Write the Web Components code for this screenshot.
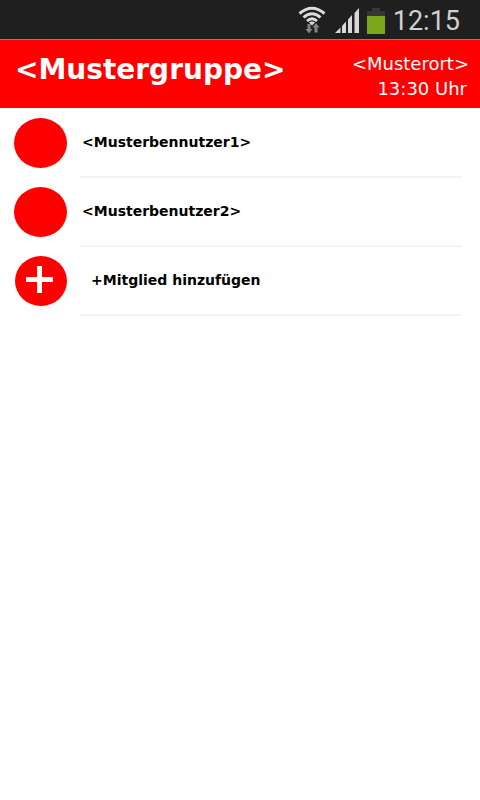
<!DOCTYPE html>
<html lang="de">
<head>
<meta charset="utf-8">
<meta name="viewport" content="width=device-width, initial-scale=1">
<title>Mustergruppe</title>
<style>
  body { margin: 0; background: #fff; color: #000; font-family: "DejaVu Sans", sans-serif; }
</style>
</head>
<body>
<group-screen></group-screen>

<script>
const define = (name, html) => {
  const template = document.createElement('template');
  template.innerHTML = html;
  customElements.define(name, class extends HTMLElement {
    constructor() {
      super();
      this.attachShadow({ mode: 'open' }).append(template.content.cloneNode(true));
    }
  });
};

define('status-bar', `
  <style>
    :host { display: flex; align-items: center; justify-content: flex-end; height: 39px; padding-right: 20px; background: #1f1f1f; border-bottom: 1px solid #8a8078; }
    svg { display: block; flex: none; }
    .signal { margin-left: 9px; margin-top: 3px; }
    .battery { margin-left: 8px; margin-top: 3px; }
    time { margin-left: 8px; padding-top: 3px; color: #d0d0d0; font: 400 27px/32px Roboto, sans-serif; }
  </style>
  <svg width="28" height="28" viewBox="0 0 28 28" aria-label="WLAN" role="img">
    <g fill="none" stroke="#dcdcdc" stroke-width="3">
      <path d="M1.500 7.500Q14 -3 26.500 7.500"/>
      <path d="M5.500 11.500Q14 4 22.500 11.500"/>
      <path d="M9 15Q14 10.500 19 15"/>
    </g>
    <path d="M11 16.500Q14 14.500 17 16.500L14 19.500z" fill="#dcdcdc"/>
    <path d="M9.500 18h3v5h2l-3.500 4.500L7.500 23h2zM16.500 26.500v-5h-2l3.500-4.500 3.500 4.500h-2v5z" fill="#858585"/>
  </svg>
  <svg class="signal" width="24" height="26" viewBox="0 0 24 26" aria-label="Empfang" role="img">
    <path d="M0 25L5.500 19.500V25zM7 18L11 13.500V25H7zM13 11.500L17 7V25h-4zM19.500 5L24 0V25h-4.500z" fill="#d8d8d8"/>
  </svg>
  <svg class="battery" width="18" height="26" viewBox="0 0 18 26" aria-label="Akku" role="img">
    <path d="M5 0h8v3h5v5H0V3h5z" fill="#35373a"/>
    <path d="M0 8h18v18H0z" fill="#7aa81a"/>
  </svg>
  <time>12:15</time>
`);

define('group-header', `
  <style>
    :host { display: flex; justify-content: space-between; height: 68px; padding: 0 11px 0 15px; box-sizing: border-box; background: #f00; color: #fff; }
    h1 { margin: 14px 0 0; font-size: 28px; line-height: 32px; font-weight: 700; }
    .meet { margin-top: 11px; font-size: 18px; line-height: 25px; text-align: right; }
    .when { padding-right: 2px; }
  </style>
  <h1><slot></slot></h1>
  <div class="meet">
    <div><slot name="place"></slot></div>
    <div class="when"><slot name="time"></slot></div>
  </div>
`);

define('group-row', `
  <style>
    :host { display: flex; height: 69px; padding: 0 18px 0 14px; box-sizing: border-box; }
    .avatar { margin-top: 9px; width: 53px; height: 50px; flex: none; }
    .name { flex: 1; min-width: 0; margin-left: 13px; padding: 22px 2px 0; box-sizing: border-box; border-bottom: 2px solid #f4f4f4; font-size: 14px; line-height: 22px; font-weight: 700; }
  </style>
  <div class="avatar"><slot name="avatar"></slot></div>
  <div class="name"><slot></slot></div>
`);

define('user-avatar', `
  <style>
    :host { display: block; width: 53px; height: 50px; border-radius: 50%; background: #f00; }
  </style>
`);

define('group-screen', `
  <style>
    :host { display: block; min-height: 100vh; background: #fff; }
    main { padding-top: 1px; }
    button { display: block; border: 0; padding: 0; background: none; color: inherit; font: inherit; cursor: pointer; }
    .add { width: 52px; height: 50px; margin-left: auto; padding: 0 3px 3px 0; border-radius: 50%; background: #f00; }
    .add svg { display: block; margin: 0 auto; }
    .label { padding-left: 9px; }
  </style>
  <status-bar></status-bar>
  <group-header>&lt;Mustergruppe&gt;<span slot="place">&lt;Musterort&gt;</span><span slot="time">13:30 Uhr</span></group-header>
  <main>
    <group-row><user-avatar slot="avatar"></user-avatar>&lt;Musterbennutzer1&gt;</group-row>
    <group-row><user-avatar slot="avatar"></user-avatar>&lt;Musterbenutzer2&gt;</group-row>
    <group-row>
      <button class="add" slot="avatar" type="button" aria-label="Mitglied hinzufügen"><svg width="27" height="27" viewBox="0 0 27 27"><path d="M11 0h5v11h11v5H16v11h-5V16H0v-5h11z" fill="#fff"/></svg></button>
      <button class="label" type="button">+Mitglied hinzufügen</button>
    </group-row>
  </main>
`);
</script>
</body>
</html>
